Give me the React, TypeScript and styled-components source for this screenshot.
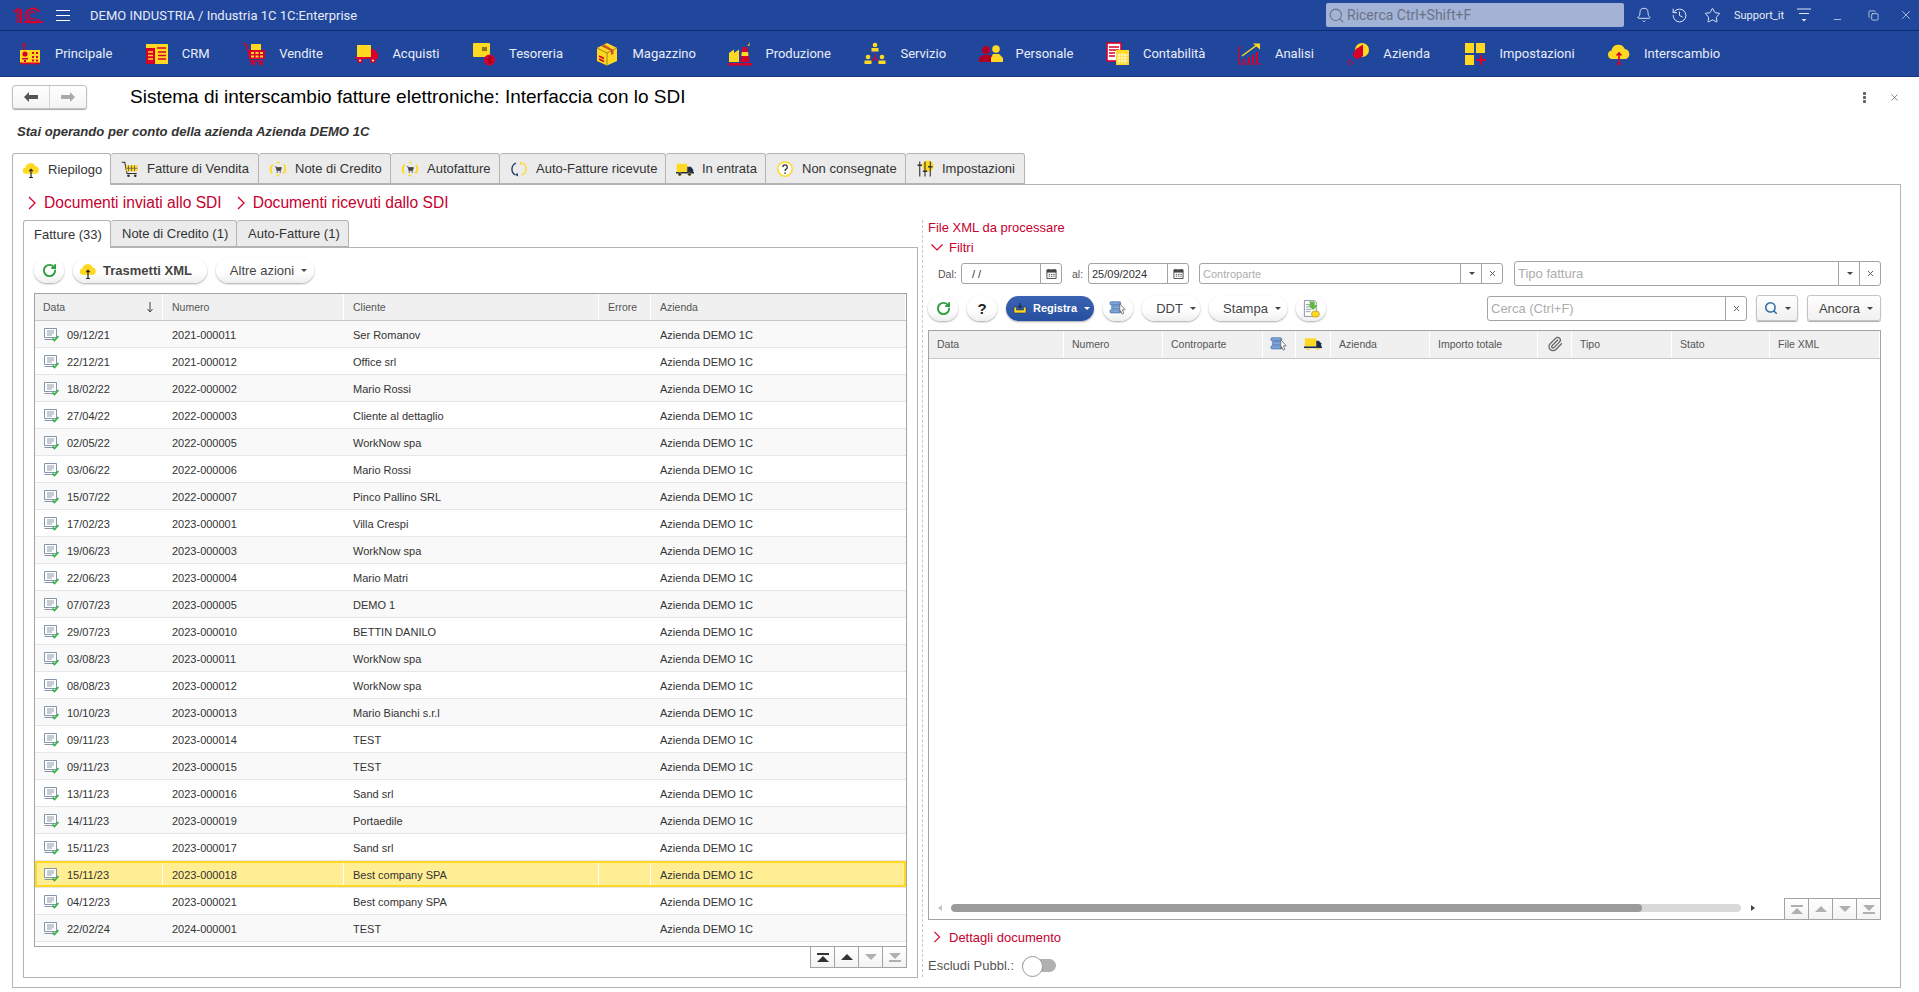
import React from "react";
import styled, { createGlobalStyle } from "styled-components";
import { Bell, History, Star, X, Search, Paperclip, RotateCw, Minus, Copy } from "lucide-react";

const Y = "#ffd921";
const R = "#d8002b";

const Global = createGlobalStyle`
  html, body { margin: 0; padding: 0; background: #fff; }
  body { font-family: "Liberation Sans", Arial, sans-serif; color: #333; overflow: hidden; }
  * { box-sizing: border-box; }
`;

const Page = styled.div`
  width: 1919px;
  height: 992px;
  display: flex;
  flex-direction: column;
  overflow: hidden;
`;

const TitleBar = styled.header`
  height: 31px;
  background: #21479d;
  border-bottom: 1px solid #0c2a73;
  display: flex;
  align-items: center;
  padding-left: 13px;
  color: #e6ebf6;
`;
const Logo = styled.svg`
  width: 30px;
  height: 18px;
  flex: none;
`;
const Hamburger = styled.div`
  width: 14px;
  height: 11px;
  margin-left: 13px;
  border-top: 1px solid #fff;
  border-bottom: 1px solid #fff;
  position: relative;
  &::after {
    content: "";
    position: absolute;
    left: 0;
    right: 0;
    top: 4px;
    height: 1px;
    background: #fff;
  }
`;
const AppName = styled.div`
  margin-left: 20px;
  font: 13px Roboto, sans-serif;
  width: 1236px;
  white-space: nowrap;
`;
const GlobalSearch = styled.div`
  width: 298px;
  height: 24px;
  background: #a3b3d6;
  border-radius: 2px;
  display: flex;
  align-items: center;
  padding-left: 2px;
  gap: 2px;
  color: #6a7286;
  font: 14px Roboto, sans-serif;
`;
const TopIcon = styled.div<{ $w: number }>`
  width: ${(p) => p.$w}px;
  display: flex;
  justify-content: center;
  align-items: center;
  color: #dfe6f5;
  flex: none;
`;
const LowMinus = styled(Minus)`
  margin-top: 9px;
`;
const UserName = styled.div`
  width: 50px;
  margin-left: 4px;
  font: 11px Roboto, sans-serif;
  white-space: nowrap;
`;

const NavBar = styled.nav`
  height: 46px;
  background: #21479d;
  border-bottom: 1px solid #17367f;
  display: flex;
  align-items: center;
  padding-left: 18px;
`;
const NavItem = styled.div`
  display: flex;
  align-items: center;
  margin-right: 32.5px;
  color: #e9edf7;
  font: 13px Roboto, sans-serif;
  white-space: nowrap;
  svg { width: 24px; height: 24px; margin-right: 13px; flex: none; }
`;

const HeadRow = styled.div`
  height: 24px;
  margin-top: 8px;
  padding: 0 10px 0 12px;
  display: flex;
  align-items: center;
`;
const NavButtons = styled.div`
  width: 75px;
  height: 24px;
  display: flex;
  border: 1px solid #c0c0c0;
  border-radius: 3px;
  background: linear-gradient(#fff, #f4f4f4);
  box-shadow: 0 1px 1px #aaa;
`;
const NavButton = styled.div<{ $sep?: boolean }>`
  flex: 1;
  display: flex;
  align-items: center;
  justify-content: center;
  border-right: ${(p) => (p.$sep ? "1px solid #d4d4d4" : "none")};
  svg { width: 14px; height: 10px; }
`;
const PageTitle = styled.h1`
  margin: 0 0 0 43px;
  font: 400 19px "Liberation Sans", Arial, sans-serif;
  color: #000;
  white-space: nowrap;
  flex: 1;
`;
const HeadAction = styled.div`
  width: 30px;
  display: flex;
  justify-content: center;
  color: #444;
`;
const Dots = styled.div`
  width: 3px;
  height: 11px;
  background: radial-gradient(circle at 1.5px 1.5px, #666 1.4px, transparent 1.5px) 0 0 / 3px 4px repeat-y;
`;
const Subtitle = styled.div`
  margin: 16px 0 0 17px;
  height: 14px;
  font: italic 700 13.1px/14px "Liberation Sans", Arial, sans-serif;
  color: #333;
`;

const TabStrip = styled.div`
  display: flex;
  height: 32px;
  position: relative;
  z-index: 1;
`;
const MainStrip = styled(TabStrip)`
  margin: 14px 0 0 12px;
`;
const Tab = styled.div<{ $w: number; $active?: boolean }>`
  width: ${(p) => p.$w}px;
  height: ${(p) => (p.$active ? "32px" : "31px")};
  display: flex;
  align-items: center;
  gap: 8px;
  padding-left: ${(p) => (p.$active ? 9 : 10)}px;
  border: 1px solid #b3b3b3;
  border-left-width: ${(p) => (p.$active ? "1px" : "0")};
  border-bottom: ${(p) => (p.$active ? "none" : "1px solid #b3b3b3")};
  border-radius: 3px 3px 0 0;
  background: ${(p) => (p.$active ? "#fff" : "#ebebeb")};
  font-size: 13px;
  color: #333;
  white-space: nowrap;
  svg { width: 18px; height: 18px; flex: none; }
`;
const MainFrame = styled.section`
  margin: -1px 0 0 12px;
  width: 1889px;
  height: 804px;
  border: 1px solid #b3b3b3;
  display: flex;
  flex-direction: column;
`;
const Links = styled.div`
  height: 35px;
  display: flex;
  align-items: center;
  padding-left: 15px;
`;
const Disclosure = styled.div<{ $size: number; $ml?: number; $gap: number }>`
  display: flex;
  align-items: center;
  margin-left: ${(p) => p.$ml ?? 0}px;
  gap: ${(p) => p.$gap}px;
  font-size: ${(p) => p.$size}px;
  color: #c6002f;
  white-space: nowrap;
  svg { flex: none; }
`;
const Split = styled.div`
  flex: 1;
  display: flex;
  padding-left: 10px;
`;
const LeftPane = styled.div`
  width: 895px;
  height: 757px;
`;
const SubStrip = styled(TabStrip)`
  height: 28px;
`;
const SubTab = styled(Tab)`
  height: ${(p) => (p.$active ? "28px" : "27px")};
  font-size: 13px;
  padding-left: ${(p) => (p.$active ? 10 : 11)}px;
`;
const LeftBody = styled.div`
  margin-top: -1px;
  height: 731px;
  border: 1px solid #b3b3b3;
  padding: 10px 10px 0;
`;
const Toolbar = styled.div`
  display: flex;
  align-items: center;
  height: 25px;
  gap: 9px;
`;
const Pill = styled.div<{ $w: number; $primary?: boolean; $bold?: boolean; $size?: number; $pl?: number; $pr?: number }>`
  width: ${(p) => p.$w}px;
  height: 25px;
  padding: 0 ${(p) => p.$pr ?? 0}px 0 ${(p) => p.$pl ?? 0}px;
  border-radius: 13px;
  display: flex;
  align-items: center;
  justify-content: center;
  gap: 6px;
  font-size: ${(p) => p.$size ?? 13}px;
  font-weight: ${(p) => (p.$bold || p.$primary ? 700 : 400)};
  color: ${(p) => (p.$primary ? "#fff" : "#444")};
  background: ${(p) => (p.$primary ? "linear-gradient(#3a62b2, #26509f)" : "linear-gradient(#fff 55%, #efefef)")};
  box-shadow: 0 1px 2px #a9a9a9;
  flex: none;
  white-space: nowrap;
  svg { flex: none; }
`;
const Caret = styled.span<{ $light?: boolean }>`
  display: inline-block;
  margin-left: 1px;
  width: 0;
  height: 0;
  border-left: 3px solid transparent;
  border-right: 3px solid transparent;
  border-top: 3px solid ${(p) => (p.$light ? "#fff" : "#444")};
`;
const Question = styled.span`
  font-size: 15px;
  font-weight: 700;
  color: #222;
`;
const Grid = styled.div<{ $h: number; $mt: number }>`
  margin-top: ${(p) => p.$mt}px;
  height: ${(p) => p.$h}px;
  border: 1px solid #a3a3a3;
  background: #fff;
  position: relative;
`;
const HeaderRow = styled.div<{ $cols: string; $h: number }>`
  height: ${(p) => p.$h}px;
  display: grid;
  grid-template-columns: ${(p) => p.$cols};
  background: #f0f0f0;
  border-bottom: 1px solid #c8c8c8;
`;
const HeaderCell = styled.div<{ $pad?: number }>`
  display: flex;
  align-items: center;
  justify-content: space-between;
  padding: 0 8px 0 ${(p) => p.$pad ?? 8}px;
  border-right: 1px solid #fff;
  font-size: 10.5px;
  color: #555;
  white-space: nowrap;
`;
const IconHeaderCell = styled(HeaderCell)`
  justify-content: center;
  padding: 0;
  svg { width: 18px; height: 16px; }
`;
const Row = styled.div<{ $alt: boolean; $sel: boolean }>`
  height: 27px;
  display: grid;
  grid-template-columns: 128px 181px 255px 52px 255px;
  align-items: stretch;
  background: ${(p) => (p.$sel ? "#ffee94" : p.$alt ? "#f9f9f9" : "#fff")};
  border-bottom: 1px solid #e6e6e6;
  box-shadow: ${(p) => (p.$sel ? `inset 0 0 0 2px ${Y}` : "none")};
  font-size: 11px;
  color: #333;
`;
const Cell = styled.div<{ $sel: boolean }>`
  display: flex;
  align-items: center;
  padding: 1px 9px 0;
  gap: 8px;
  white-space: nowrap;
  border-right: ${(p) => (p.$sel ? "1px solid #fff" : "none")};
  margin: ${(p) => (p.$sel ? "2px 0" : "0")};
  svg { width: 15px; height: 15px; flex: none; }
`;
const Pager = styled.div`
  display: flex;
  justify-content: flex-end;
  margin-top: -1px;
  position: relative;
`;
const FloatingPager = styled.div`
  position: absolute;
  right: -1px;
  bottom: -1px;
  display: flex;
  background: #fff;
`;
const PagerCell = styled.div<{ $on?: boolean; $top?: boolean; $bottom?: boolean }>`
  width: 25px;
  height: 22px;
  margin-left: -1px;
  border: 1px solid #a3a3a3;
  background: linear-gradient(#fff, #f3f3f3);
  display: flex;
  flex-direction: column;
  align-items: center;
  justify-content: center;
  gap: 1px;
  &::before {
    content: "";
    display: ${(p) => (p.$top ? "block" : "none")};
    width: 12px;
    height: 2px;
    background: ${(p) => (p.$on ? "#333" : "#b0b0b0")};
  }
  &::after {
    content: "";
    display: ${(p) => (p.$bottom ? "block" : "none")};
    width: 12px;
    height: 2px;
    background: #b0b0b0;
  }
`;
const Tri = styled.span<{ $on?: boolean; $down?: boolean }>`
  width: 0;
  height: 0;
  border-left: 6px solid transparent;
  border-right: 6px solid transparent;
  border-${(p) => (p.$down ? "top" : "bottom")}: 6px solid ${(p) => (p.$on ? "#333" : "#b0b0b0")};
`;

const RightPane = styled.div`
  width: 959px;
  height: 757px;
  margin-left: 4px;
  border-left: 1px dashed #c8c8c8;
  padding-left: 5px;
  display: flex;
  flex-direction: column;
`;
const PaneTitle = styled.div`
  height: 16px;
  font-size: 13px;
  line-height: 16px;
  color: #c6002f;
`;
const FilterHead = styled.div`
  height: 24px;
  display: flex;
  align-items: center;
`;
const FilterRow = styled.div`
  height: 26px;
  margin-top: 1px;
  display: flex;
  align-items: center;
  padding-left: 10px;
`;
const FieldLabel = styled.div<{ $w: number; $ml?: number }>`
  width: ${(p) => p.$w}px;
  margin-left: ${(p) => p.$ml ?? 0}px;
  font-size: 10.5px;
  color: #555;
  flex: none;
`;
const Field = styled.div<{ $w: number; $h?: number; $ml?: number }>`
  width: ${(p) => p.$w}px;
  height: ${(p) => p.$h ?? 21}px;
  margin-left: ${(p) => p.$ml ?? 0}px;
  border: 1px solid #a3a3a3;
  border-radius: 3px;
  display: flex;
  align-items: stretch;
  background: #fff;
  flex: none;
`;
const FieldText = styled.div<{ $size?: number; $ph?: boolean; $pad?: number }>`
  flex: 1;
  display: flex;
  align-items: center;
  padding-left: ${(p) => p.$pad ?? 3}px;
  font-size: ${(p) => p.$size ?? 11}px;
  color: ${(p) => (p.$ph ? "#adadad" : "#333")};
  white-space: nowrap;
  min-width: 0;
`;
const FieldButton = styled.div<{ $w?: number }>`
  width: ${(p) => p.$w ?? 21}px;
  border-left: 1px solid #a3a3a3;
  display: flex;
  align-items: center;
  justify-content: center;
  color: #444;
  flex: none;
`;
const SmallX = styled(X)`
  width: 9px;
  height: 9px;
  stroke-width: 2.5;
  color: #555;
`;
const RightTools = styled(Toolbar)`
  margin-top: 9px;
`;
const SquareButton = styled.div<{ $w: number; $pl?: number }>`
  width: ${(p) => p.$w}px;
  height: 26px;
  padding-left: ${(p) => p.$pl ?? 0}px;
  border: 1px solid #c4c4c4;
  border-radius: 3px;
  background: linear-gradient(#fff, #f0f0f0);
  box-shadow: 0 1px 1px #aaa;
  display: flex;
  align-items: center;
  justify-content: center;
  gap: 6px;
  font-size: 13px;
  color: #444;
  flex: none;
`;
const ToolSpacer = styled.div`
  flex: 1;
`;
const ScrollRow = styled.div`
  position: absolute;
  left: 0;
  right: 0;
  bottom: 0;
  height: 22px;
  display: flex;
  align-items: center;
  padding-left: 9px;
`;
const ArrowLeft = styled.span`
  width: 0;
  height: 0;
  border-top: 3px solid transparent;
  border-bottom: 3px solid transparent;
  border-right: 4px solid #c4c4c4;
`;
const ArrowRight = styled.span`
  width: 0;
  height: 0;
  margin-left: 10px;
  border-top: 3px solid transparent;
  border-bottom: 3px solid transparent;
  border-left: 4px solid #444;
`;
const Track = styled.div`
  width: 790px;
  height: 8px;
  margin-left: 9px;
  background: #d9d9d9;
  border-radius: 4px;
  overflow: hidden;
`;
const Thumb = styled.div`
  width: 691px;
  height: 100%;
  background: #9b9b9b;
  border-radius: 4px;
`;
const DetailRow = styled.div`
  height: 18px;
  margin-top: 8px;
  display: flex;
  align-items: center;
`;
const ExcludeRow = styled.div`
  height: 24px;
  margin-top: 7px;
  display: flex;
  align-items: center;
  font-size: 13px;
  color: #555;
  gap: 8px;
`;
const Toggle = styled.div`
  width: 34px;
  height: 13px;
  background: #b0b0b0;
  border-radius: 7px;
  position: relative;
  &::before {
    content: "";
    position: absolute;
    left: 0;
    top: -3px;
    width: 19px;
    height: 19px;
    border-radius: 50%;
    background: #fff;
    border: 1px solid #9a9a9a;
  }
`;

/* Drawn icons */
const IPrincipale = () => (
  <svg viewBox="0 0 24 24">
    <path d="M6 2v8" stroke={R} strokeWidth="1.4" />
    <circle cx="6" cy="2.500" r="1.600" fill={R} />
    <rect x="2" y="8" width="20" height="13" fill={Y} />
    <rect x="2" y="20.500" width="20" height="1.800" fill={R} />
    <circle cx="7" cy="12" r="2.600" fill={R} />
    <path d="M14 10h2v2h-2zM18 10h2v2h-2zM14 14h2v2h-2zM18 14h2v2h-2zM14 17.500h2v2h-2zM18 17.500h2v2h-2zM4 16h6v1.500H4zM6 18h2v2H6z" fill={R} />
  </svg>
);
const ICrm = () => (
  <svg viewBox="0 0 24 24">
    <rect x="1" y="2" width="22" height="20" fill={Y} />
    <rect x="1" y="6" width="9" height="16" fill={R} />
    <path d="M3 10h5M3 13.500h5M3 17h5" stroke={Y} strokeWidth="1.400" />
    <path d="M12 6h9M13 10h8M13 13.500h8M13 17h8" stroke={R} strokeWidth="1.400" />
  </svg>
);
const IVendite = () => (
  <svg viewBox="0 0 24 24">
    <path d="M1 1l4 3 3.500 15H21" fill="none" stroke={R} strokeWidth="1.500" />
    <rect x="9" y="2" width="10" height="6" fill={Y} />
    <rect x="7" y="8" width="16" height="9" fill={R} />
    <path d="M9 10h3v2H9zM13.500 10h3v2h-3zM18 10h3v2h-3zM9 13.500h3v2H9zM13.500 13.500h3v2h-3zM18 13.500h3v2h-3z" fill={Y} />
    <circle cx="11" cy="21.500" r="2" fill={R} />
    <circle cx="19" cy="21.500" r="2" fill={R} />
  </svg>
);
const IAcquisti = () => (
  <svg viewBox="0 0 24 24">
    <rect x="2" y="3" width="14" height="12" fill={Y} />
    <path d="M16 7h3l4 5v5H0v-2h16z" fill={R} />
    <circle cx="5" cy="18.500" r="2.600" fill={R} />
    <circle cx="5" cy="18.500" r=".9" fill="#fff" />
    <circle cx="18" cy="18.500" r="2.600" fill={R} />
    <circle cx="18" cy="18.500" r=".9" fill="#fff" />
  </svg>
);
const ITesoreria = () => (
  <svg viewBox="0 0 24 24">
    <rect x="1" y="1" width="17" height="14" rx="1" fill={Y} />
    <rect x="10" y="5" width="5" height="4" fill="#8a7620" />
    <circle cx="17.500" cy="18" r="5.500" fill={R} />
    <path d="M16 15h3v2h-3v2h3v2h-3" fill="none" stroke="#7d001a" strokeWidth="1" />
  </svg>
);
const IMagazzino = () => (
  <svg viewBox="0 0 24 24">
    <path d="M12 1l10 5v13l-10 4.500L2 19V6z" fill={Y} />
    <path d="M2 6l10 5 10-5M12 11v12.500" fill="none" stroke="#a5841a" strokeWidth="1" />
    <path d="M6 4l10 5v4l2.500-1.200V8L9 2.500z" fill="#c8502a" />
    <path d="M4 14l5 2.500M4 17l5 2.500" stroke={R} strokeWidth="1.400" />
  </svg>
);
const IProduzione = () => (
  <svg viewBox="0 0 24 24">
    <path d="M1 20v-9l5-3.500V11l5-3.500V20z" fill={Y} />
    <path d="M12.500 20l2-15h4.500l2.500 15z" fill={R} />
    <path d="M13.800 10h6.200l.5 4h-7.200z" fill={Y} />
    <path d="M19.500 4l2.500-4-.8 4z" fill={Y} />
    <rect x="0" y="21" width="24" height="2.500" fill={R} />
  </svg>
);
const IServizio = () => (
  <svg viewBox="0 0 24 24">
    <circle cx="12" cy="3" r="2.300" fill={Y} />
    <rect x="8.500" y="6" width="7" height="3.500" fill={Y} />
    <circle cx="5" cy="15" r="2.300" fill={Y} />
    <rect x="1.500" y="18.500" width="7" height="3.500" fill={Y} />
    <circle cx="19" cy="15" r="2.300" fill={Y} />
    <rect x="15.500" y="18.500" width="7" height="3.500" fill={Y} />
    <path d="M12 12v4l-3 3M12 16l3 3" fill="none" stroke={R} strokeWidth="1.100" />
  </svg>
);
const IPersonale = () => (
  <svg viewBox="0 0 24 24">
    <circle cx="7" cy="8" r="4" fill="#b00028" />
    <path d="M0 20v-4l3-3h8l3 3v4z" fill="#b00028" />
    <circle cx="17" cy="7" r="3.800" fill={Y} />
    <path d="M12 20v-4l2-4h6l4 4v4z" fill={Y} />
  </svg>
);
const IContabilita = () => (
  <svg viewBox="0 0 24 24">
    <rect x="1" y="1" width="14" height="18" fill="#fff" stroke={R} strokeWidth="1.600" />
    <path d="M3 5h10M3 8h10M3 11h6M3 14h6" stroke={R} strokeWidth="1.300" />
    <rect x="10" y="8" width="13" height="15" fill={Y} />
    <path d="M13 11v11M16 11v11M19 11v11M11 13h11M11 16h11M11 19h11" stroke="#fff" strokeWidth=".8" />
  </svg>
);
const IAnalisi = () => (
  <svg viewBox="0 0 24 24">
    <path d="M1 4v18h22" fill="none" stroke={R} strokeWidth="1.200" />
    <path d="M5 17h2v4H5zM10 15h2v6h-2zM14 13h2v8h-2zM18 10h2v11h-2z" fill={R} />
    <path d="M4 14L19 3" stroke={Y} strokeWidth="1.500" />
    <path d="M15 1.500h7v6z" fill={Y} />
  </svg>
);
const IAzienda = () => (
  <svg viewBox="0 0 24 24">
    <circle cx="16" cy="8" r="7" fill={Y} />
    <path d="M17 2.500L10 7l-3.500 6.500 4 4 6.500-3.500z" fill={R} />
    <path d="M2 23l4-5M5 23l3-3M1 20l3-2" stroke={R} strokeWidth="1" />
  </svg>
);
const IImpostazioni = () => (
  <svg viewBox="0 0 24 24">
    <rect x="2" y="1" width="9" height="10" fill={Y} />
    <rect x="13" y="1" width="9" height="10" fill={Y} />
    <rect x="2" y="13" width="9" height="10" fill={Y} />
    <path d="M18 13v10M13 18h10" stroke={R} strokeWidth="2" />
  </svg>
);
const Cloud = ({ arrow }: { arrow: string }) => (
  <svg viewBox="0 0 24 24" width="18" height="18">
    <path d="M5 17a4.300 4.300 0 0 1-.5-8.500A7 7 0 0 1 17.800 7a5.200 5.200 0 0 1 1.200 10z" fill={Y} />
    <path d="M12 11v11M9.500 13.500L12 11l2.500 2.500M9.500 22h5" fill="none" stroke={arrow} strokeWidth="1.600" />
  </svg>
);
const ICartDark = () => (
  <svg viewBox="0 0 24 24">
    <path d="M1 3h4l3 15h13" fill="none" stroke="#333" strokeWidth="1.400" />
    <rect x="7" y="7" width="15" height="8" fill={Y} />
    <path d="M10 7v8M14 7v8M18 7v8M7 11h15" stroke="#555" strokeWidth="1" />
    <circle cx="10" cy="21" r="1.800" fill="#333" />
    <circle cx="19" cy="21" r="1.800" fill="#333" />
  </svg>
);
const ICycleCart = () => (
  <svg viewBox="0 0 24 24">
    <path d="M5 6a10 10 0 0 0-1 12M19 18a10 10 0 0 0 1-12" fill="none" stroke={Y} strokeWidth="2.500" />
    <path d="M9 3l5-1v3zM15 21l-5 1v-3z" fill={Y} />
    <path d="M8 9h1.500l1 5h5l1-4h-6.500" fill="#444" stroke="#444" strokeWidth="1" />
    <circle cx="11" cy="16" r="1" fill="#444" />
    <circle cx="15" cy="16" r="1" fill="#444" />
  </svg>
);
const ICycle = () => (
  <svg viewBox="0 0 24 24">
    <path d="M8 4a9 9 0 0 0-1 16" fill="none" stroke="#1e3a6d" strokeWidth="1.800" />
    <path d="M11 22l-4-2 3-3z" fill="#1e3a6d" />
    <path d="M16 20a9 9 0 0 0 1-16" fill="none" stroke={Y} strokeWidth="1.800" />
    <path d="M13 2l4 2-3 3z" fill={Y} />
  </svg>
);
const ITruck = () => (
  <svg viewBox="0 0 24 24">
    <rect x="1" y="5" width="14" height="12" fill={Y} />
    <path d="M15 9h5l3 4v4h-8z" fill="#222d4a" />
    <rect x="0" y="16" width="24" height="2" fill="#222d4a" />
    <circle cx="5" cy="19" r="2.200" fill="#222d4a" stroke={Y} strokeWidth=".6" />
    <circle cx="18" cy="19" r="2.200" fill="#222d4a" stroke={Y} strokeWidth=".6" />
  </svg>
);
const IHelp = () => (
  <svg viewBox="0 0 24 24">
    <circle cx="12" cy="12" r="9.500" fill="#fff" stroke={Y} strokeWidth="2" />
    <path d="M9 9.500a3 3 0 1 1 4.500 2.600c-1 .6-1.500 1-1.500 2.400" fill="none" stroke="#333" strokeWidth="1.800" />
    <circle cx="12" cy="17.500" r="1.100" fill="#333" />
  </svg>
);
const ISliders = () => (
  <svg viewBox="0 0 24 24">
    <circle cx="16" cy="8" r="7.500" fill={Y} />
    <path d="M5 2v20M12 2v20M19 2v20" stroke="#333" strokeWidth="1.500" />
    <path d="M2 7h6M9 15h6M16 9h6" stroke="#333" strokeWidth="2" />
  </svg>
);
const IDoc = () => (
  <svg viewBox="0 0 15 15">
    <path d="M.5 1.500h12v9h-12z" fill="#fff" stroke="#8396ab" />
    <path d="M.5 12.500h9" stroke="#8396ab" />
    <path d="M3 4h7M3 6h7M3 8h5" stroke="#8d99a6" />
    <path d="M8.500 11.500l2 2 4-4.500" fill="none" stroke="#37b24a" strokeWidth="1.800" />
  </svg>
);
const IPointer = () => (
  <svg viewBox="0 0 20 18" width="18" height="16">
    <rect x="1" y="2" width="12" height="3.500" rx="1" fill="#7fa6d8" stroke="#3c6ca8" strokeWidth=".8" />
    <rect x="3" y="6.500" width="10" height="3.500" fill="#7fa6d8" stroke="#3c6ca8" strokeWidth=".8" />
    <rect x="1" y="11" width="12" height="3.500" rx="1" fill="#7fa6d8" stroke="#3c6ca8" strokeWidth=".8" />
    <path d="M12 4l6 7h-3l1.500 4-2 .8L13 12l-1 2z" fill="#fff" stroke="#555" strokeWidth=".8" />
  </svg>
);
const IHeaderTruck = () => (
  <svg viewBox="0 0 22 18" width="20" height="16">
    <rect x="1" y="2" width="14" height="10" fill={Y} />
    <path d="M15 5h3l3 3v5h-6z" fill="#1e2b4f" />
    <rect x="0" y="12" width="22" height="2" fill="#1e2b4f" />
    <circle cx="5" cy="15" r="1.500" fill={Y} />
    <circle cx="17" cy="15" r="1.500" fill={Y} />
  </svg>
);
const IExport = () => (
  <svg viewBox="0 0 24 24" width="19" height="19">
    <path d="M3 2h13l2 2v18H3z" fill="#fff" stroke="#7a8593" strokeWidth="1.100" />
    <path d="M5 7h9M5 10h9M5 13h7M5 16h6" stroke="#7a8593" />
    <path d="M9 3h7v5h4l-6 6-6-6h3z" fill="#5cb83f" />
    <ellipse cx="17" cy="19" rx="5" ry="4" fill={Y} stroke="#a98f14" strokeWidth=".8" />
  </svg>
);
const ITray = () => (
  <svg viewBox="0 0 14 12" width="14" height="12">
    <path d="M1 5v6h12V5h-2.500v3h-7V5z" fill={Y} stroke="#1c2d56" strokeWidth=".6" />
    <path d="M7 1v5M5 4l2 2 2-2" fill="none" stroke="#1c2d56" strokeWidth="1.200" />
  </svg>
);
const ICalendar = () => (
  <svg viewBox="0 0 12 12" width="11" height="11">
    <path d="M1 2h10v9.500H1z" fill="#fff" stroke="#444" />
    <path d="M1 2h10v3H1z" fill="#444" />
    <path d="M3 1v2M9 1v2" stroke="#444" strokeWidth="1.200" />
    <path d="M3 7h1.500M5.500 7H7M8 7h1.500M3 9h1.500M5.500 9H7M8 9h1.500" stroke="#444" />
  </svg>
);
const ChevRight = ({ w, h }: { w: number; h: number }) => (
  <svg width={w} height={h} viewBox="0 0 8 14">
    <path d="M1 1l6 6-6 6" fill="none" stroke={R} strokeWidth="1.300" />
  </svg>
);
const ChevDown = () => (
  <svg width="12" height="7" viewBox="0 0 12 7">
    <path d="M.5 .5L6 6l5.500-5.500" fill="none" stroke={R} strokeWidth="1.200" />
  </svg>
);
const DownChevronSlot = styled.span`
  display: flex;
  margin-left: 3px;
`;
const RightChevronSlot = styled.span`
  display: flex;
  margin-left: 5px;
`;

const navItems: [React.ComponentType, string][] = [
  [IPrincipale, "Principale"],
  [ICrm, "CRM"],
  [IVendite, "Vendite"],
  [IAcquisti, "Acquisti"],
  [ITesoreria, "Tesoreria"],
  [IMagazzino, "Magazzino"],
  [IProduzione, "Produzione"],
  [IServizio, "Servizio"],
  [IPersonale, "Personale"],
  [IContabilita, "Contabilità"],
  [IAnalisi, "Analisi"],
  [IAzienda, "Azienda"],
  [IImpostazioni, "Impostazioni"],
  [() => <Cloud arrow={R} />, "Interscambio"],
];

const mainTabs: [React.ComponentType, string, number][] = [
  [() => <Cloud arrow="#222" />, "Riepilogo", 99],
  [ICartDark, "Fatture di Vendita", 148],
  [ICycleCart, "Note di Credito", 132],
  [ICycleCart, "Autofatture", 109],
  [ICycle, "Auto-Fatture ricevute", 166],
  [ITruck, "In entrata", 100],
  [IHelp, "Non consegnate", 140],
  [ISliders, "Impostazioni", 119],
];

const rows: [string, string, string][] = [
  ["09/12/21", "2021-000011", "Ser Romanov"],
  ["22/12/21", "2021-000012", "Office srl"],
  ["18/02/22", "2022-000002", "Mario Rossi"],
  ["27/04/22", "2022-000003", "Cliente al dettaglio"],
  ["02/05/22", "2022-000005", "WorkNow spa"],
  ["03/06/22", "2022-000006", "Mario Rossi"],
  ["15/07/22", "2022-000007", "Pinco Pallino SRL"],
  ["17/02/23", "2023-000001", "Villa Crespi"],
  ["19/06/23", "2023-000003", "WorkNow spa"],
  ["22/06/23", "2023-000004", "Mario Matri"],
  ["07/07/23", "2023-000005", "DEMO 1"],
  ["29/07/23", "2023-000010", "BETTIN DANILO"],
  ["03/08/23", "2023-000011", "WorkNow spa"],
  ["08/08/23", "2023-000012", "WorkNow spa"],
  ["10/10/23", "2023-000013", "Mario Bianchi s.r.l"],
  ["09/11/23", "2023-000014", "TEST"],
  ["09/11/23", "2023-000015", "TEST"],
  ["13/11/23", "2023-000016", "Sand srl"],
  ["14/11/23", "2023-000019", "Portaedile"],
  ["15/11/23", "2023-000017", "Sand srl"],
  ["15/11/23", "2023-000018", "Best company SPA"],
  ["04/12/23", "2023-000021", "Best company SPA"],
  ["22/02/24", "2024-000001", "TEST"],
];

const Refresh = () => <RotateCw size={15} color="#2e9e3e" strokeWidth={3} />;

const PagerCells = ({ on }: { on: boolean }) => (
  <>
    <PagerCell $top $on={on}><Tri $on={on} /></PagerCell>
    <PagerCell><Tri $on={on} /></PagerCell>
    <PagerCell><Tri $down /></PagerCell>
    <PagerCell $bottom><Tri $down /></PagerCell>
  </>
);

export default function App() {
  return (
    <Page>
      <Global />
      <TitleBar>
        <Logo viewBox="0 0 30 18">
          <path d="M1 6l4-3v14M8 17V3" fill="none" stroke={R} strokeWidth="2" />
          <path d="M26 6a7 7 0 1 0 0 7" fill="none" stroke={R} strokeWidth="2" />
          <path d="M22 7a3.500 3.500 0 1 0 0 5" fill="none" stroke={R} strokeWidth="1.500" />
          <path d="M11 16h19" stroke={R} strokeWidth="2" />
        </Logo>
        <Hamburger />
        <AppName>DEMO INDUSTRIA / Industria 1C 1C:Enterprise</AppName>
        <GlobalSearch>
          <Search size={17} color="#6a7286" strokeWidth={1.5} />
          Ricerca Ctrl+Shift+F
        </GlobalSearch>
        <TopIcon $w={40}><Bell size={16} strokeWidth={1.4} /></TopIcon>
        <TopIcon $w={30}><History size={17} strokeWidth={1.4} /></TopIcon>
        <TopIcon $w={36}><Star size={17} strokeWidth={1.4} /></TopIcon>
        <UserName>Support_it</UserName>
        <TopIcon $w={40}>
          <svg width="16" height="16" viewBox="0 0 16 16">
            <path d="M1 2h14M3 6.500h10" stroke="#dfe6f5" strokeWidth="1.100" />
            <path d="M5.500 12h5L8 14.500z" fill="#dfe6f5" />
          </svg>
        </TopIcon>
        <TopIcon $w={26}><LowMinus size={11} strokeWidth={1.6} /></TopIcon>
        <TopIcon $w={46}><Copy size={11} strokeWidth={1.6} /></TopIcon>
        <TopIcon $w={20}><X size={14} strokeWidth={1.2} /></TopIcon>
      </TitleBar>
      <NavBar>
        {navItems.map(([I, label]) => (
          <NavItem key={label}>
            <I />
            {label}
          </NavItem>
        ))}
      </NavBar>
      <HeadRow>
        <NavButtons>
          <NavButton $sep>
            <svg viewBox="0 0 14 10"><path d="M0 5l5-5v3h9v4H5v3z" fill="#555" /></svg>
          </NavButton>
          <NavButton>
            <svg viewBox="0 0 14 10"><path d="M14 5L9 0v3H0v4h9v3z" fill="#aaa" /></svg>
          </NavButton>
        </NavButtons>
        <PageTitle>Sistema di interscambio fatture elettroniche: Interfaccia con lo SDI</PageTitle>
        <HeadAction><Dots /></HeadAction>
        <HeadAction><X size={11} strokeWidth={1.4} /></HeadAction>
      </HeadRow>
      <Subtitle>Stai operando per conto della azienda Azienda DEMO 1C</Subtitle>
      <MainStrip>
        {mainTabs.map(([I, label, w], i) => (
          <Tab key={label} $w={w} $active={i === 0}>
            <I />
            {label}
          </Tab>
        ))}
      </MainStrip>
      <MainFrame>
        <Links>
          <Disclosure $size={15.6} $gap={8}>
            <ChevRight w={8} h={14} />
            Documenti inviati allo SDI
          </Disclosure>
          <Disclosure $size={15.6} $ml={15} $gap={8}>
            <ChevRight w={8} h={14} />
            Documenti ricevuti dallo SDI
          </Disclosure>
        </Links>
        <Split>
          <LeftPane>
            <SubStrip>
              <SubTab $w={88} $active>Fatture (33)</SubTab>
              <SubTab $w={126}>Note di Credito (1)</SubTab>
              <SubTab $w={112}>Auto-Fatture (1)</SubTab>
            </SubStrip>
            <LeftBody>
              <Toolbar>
                <Pill $w={30}><Refresh /></Pill>
                <Pill $w={134} $bold $pr={9}><Cloud arrow="#222" />Trasmetti XML</Pill>
                <Pill $w={98} $pl={7}>Altre azioni <Caret /></Pill>
              </Toolbar>
              <Grid $h={654} $mt={10}>
                <HeaderRow $cols="128px 181px 255px 52px 255px" $h={27}>
                  <HeaderCell>
                    Data
                    <svg width="8" height="12" viewBox="0 0 8 12"><path d="M4 1v9M1.500 8L4 11l2.500-3" fill="none" stroke="#444" /></svg>
                  </HeaderCell>
                  <HeaderCell $pad={9}>Numero</HeaderCell>
                  <HeaderCell $pad={9}>Cliente</HeaderCell>
                  <HeaderCell $pad={9}>Errore</HeaderCell>
                  <HeaderCell $pad={9}>Azienda</HeaderCell>
                </HeaderRow>
                {rows.map(([d, n, c], i) => {
                  const sel = i === 20;
                  return (
                    <Row key={n} $alt={i % 2 === 0} $sel={sel}>
                      <Cell $sel={sel}><IDoc />{d}</Cell>
                      <Cell $sel={sel}>{n}</Cell>
                      <Cell $sel={sel}>{c}</Cell>
                      <Cell $sel={sel} />
                      <Cell $sel={false}>Azienda DEMO 1C</Cell>
                    </Row>
                  );
                })}
              </Grid>
              <Pager>
                <PagerCells on />
              </Pager>
            </LeftBody>
          </LeftPane>
          <RightPane>
            <PaneTitle>File XML da processare</PaneTitle>
            <FilterHead>
              <Disclosure $size={13} $gap={6}>
                <DownChevronSlot><ChevDown /></DownChevronSlot>
                Filtri
              </Disclosure>
            </FilterHead>
            <FilterRow>
              <FieldLabel $w={23}>Dal:</FieldLabel>
              <Field $w={101}>
                <FieldText $pad={10}>/ /</FieldText>
                <FieldButton><ICalendar /></FieldButton>
              </Field>
              <FieldLabel $w={16} $ml={10}>al:</FieldLabel>
              <Field $w={101}>
                <FieldText>25/09/2024</FieldText>
                <FieldButton><ICalendar /></FieldButton>
              </Field>
              <Field $w={304} $ml={10}>
                <FieldText $ph>Controparte</FieldText>
                <FieldButton><Caret /></FieldButton>
                <FieldButton><SmallX /></FieldButton>
              </Field>
              <Field $w={367} $h={25} $ml={11}>
                <FieldText $ph $size={13}>Tipo fattura</FieldText>
                <FieldButton><Caret /></FieldButton>
                <FieldButton><SmallX /></FieldButton>
              </Field>
            </FilterRow>
            <RightTools>
              <Pill $w={30}><Refresh /></Pill>
              <Pill $w={30}><Question>?</Question></Pill>
              <Pill $w={88} $primary $size={11} $pl={3}><ITray />Registra <Caret $light /></Pill>
              <Pill $w={30}><IPointer /></Pill>
              <Pill $w={58} $pl={10}>DDT <Caret /></Pill>
              <Pill $w={78} $pl={8}>Stampa <Caret /></Pill>
              <Pill $w={30}><IExport /></Pill>
              <ToolSpacer />
              <Field $w={260} $h={25}>
                <FieldText $ph $size={13}>Cerca (Ctrl+F)</FieldText>
                <FieldButton><SmallX /></FieldButton>
              </Field>
              <SquareButton $w={42}><Search size={14} color="#2b6da5" strokeWidth={2.6} /><Caret /></SquareButton>
              <SquareButton $w={74} $pl={4}>Ancora <Caret /></SquareButton>
            </RightTools>
            <Grid $h={592} $mt={9}>
              <HeaderRow $cols="135px 99px 100px 33px 35px 99px 108px 34px 100px 98px 110px" $h={28}>
                <HeaderCell>Data</HeaderCell>
                <HeaderCell>Numero</HeaderCell>
                <HeaderCell>Controparte</HeaderCell>
                <IconHeaderCell><IPointer /></IconHeaderCell>
                <IconHeaderCell><IHeaderTruck /></IconHeaderCell>
                <HeaderCell>Azienda</HeaderCell>
                <HeaderCell>Importo totale</HeaderCell>
                <IconHeaderCell><Paperclip size={13} color="#666" /></IconHeaderCell>
                <HeaderCell>Tipo</HeaderCell>
                <HeaderCell>Stato</HeaderCell>
                <HeaderCell>File XML</HeaderCell>
              </HeaderRow>
              <ScrollRow>
                <ArrowLeft />
                <Track><Thumb /></Track>
                <ArrowRight />
              </ScrollRow>
              <FloatingPager><PagerCells on={false} /></FloatingPager>
            </Grid>
            <DetailRow>
              <Disclosure $size={13} $gap={8}>
                <RightChevronSlot><ChevRight w={8} h={12} /></RightChevronSlot>
                Dettagli documento
              </Disclosure>
            </DetailRow>
            <ExcludeRow>
              Escludi Pubbl.:
              <Toggle />
            </ExcludeRow>
          </RightPane>
        </Split>
      </MainFrame>
    </Page>
  );
}
